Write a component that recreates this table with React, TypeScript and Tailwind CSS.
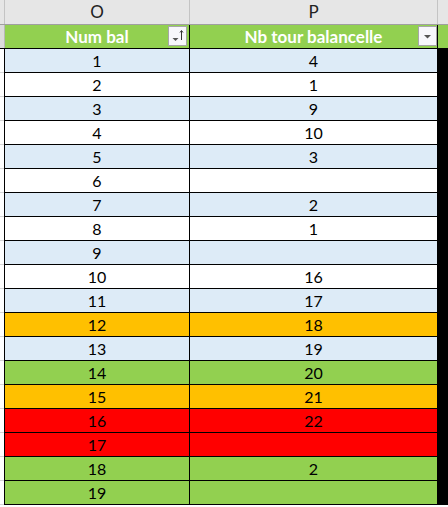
type Fill = "blue" | "white" | "orange" | "green" | "red";

const fills: Record<Fill, string> = {
  blue: "bg-[#ddebf7]",
  white: "bg-white",
  orange: "bg-[#ffc000]",
  green: "bg-[#92d050]",
  red: "bg-[#ff0000]",
};

const rows: { num: string; tour: string; fill: Fill }[] = [
  { num: "1", tour: "4", fill: "blue" },
  { num: "2", tour: "1", fill: "white" },
  { num: "3", tour: "9", fill: "blue" },
  { num: "4", tour: "10", fill: "white" },
  { num: "5", tour: "3", fill: "blue" },
  { num: "6", tour: "", fill: "white" },
  { num: "7", tour: "2", fill: "blue" },
  { num: "8", tour: "1", fill: "white" },
  { num: "9", tour: "", fill: "blue" },
  { num: "10", tour: "16", fill: "white" },
  { num: "11", tour: "17", fill: "blue" },
  { num: "12", tour: "18", fill: "orange" },
  { num: "13", tour: "19", fill: "blue" },
  { num: "14", tour: "20", fill: "green" },
  { num: "15", tour: "21", fill: "orange" },
  { num: "16", tour: "22", fill: "red" },
  { num: "17", tour: "", fill: "red" },
  { num: "18", tour: "2", fill: "green" },
  { num: "19", tour: "", fill: "green" },
];

function FilterButton({ sorted }: { sorted?: boolean }) {
  return (
    <div className="h-[20px] w-[19px] border border-[#a6a6a6] bg-[#f7f7fb] flex items-center justify-center">
      {sorted ? (
        <svg width="17" height="18" viewBox="0 0 17 18">
          <path d="M3.5 11 L9.5 11 L6.5 14 Z" fill="#555" />
          <path d="M12.5 4 L12.5 13" stroke="#333" strokeWidth="1" />
          <path d="M11 5.5 L12.5 3.5 L14 5.5" stroke="#333" strokeWidth="1" fill="none" />
        </svg>
      ) : (
        <svg width="17" height="18" viewBox="0 0 17 18">
          <path d="M5 8 L12 8 L8.5 11.5 Z" fill="#555" />
        </svg>
      )}
    </div>
  );
}

export default function App() {
  return (
    <div
      className="w-[448px] h-[507px] overflow-hidden bg-white text-black"
      style={{ fontFamily: "Lato, 'Liberation Sans', sans-serif" }}
    >
      {/* column letters */}
      <div className="flex h-[25px] bg-[#e6e6e6] border-b border-[#9f9f9f] text-[17px] text-[#222]">
        <div className="w-[4px]" />
        <div className="w-[185px] border-l border-[#c4c4c4] flex items-center justify-center">O</div>
        <div className="w-[248px] border-l border-[#c4c4c4] flex items-center justify-center">P</div>
        <div className="w-[11px] border-l border-[#c4c4c4]" />
      </div>

      {/* table header */}
      <div className="flex h-[24px] border-b border-black text-[17px] font-bold text-white">
        <div className="w-[4px] bg-[#dcdcdc]" />
        <div className="relative w-[185px] bg-[#92d050] border-l border-[#b8b8b8] flex items-center justify-center">
          Num bal
          <div className="absolute right-[2px] top-[1px]">
            <FilterButton sorted />
          </div>
        </div>
        <div className="relative w-[248px] bg-[#92d050] border-l border-black flex items-center justify-center">
          Nb tour balancelle
          <div className="absolute right-0 top-[1px]">
            <FilterButton />
          </div>
        </div>
        <div className="w-[11px] bg-[#92d050] border-l border-black" />
      </div>

      {rows.map((r) => (
        <div key={r.num} className="flex h-[24px] text-[16px]">
          <div className="w-[4px] border-b border-[#d4d4d4]" />
          <div className={`w-[185px] border-l border-b border-black flex items-center justify-center ${fills[r.fill]}`}>
            {r.num}
          </div>
          <div className={`w-[248px] border-l border-b border-black flex items-center justify-center ${fills[r.fill]}`}>
            {r.tour}
          </div>
          <div className="w-[11px] bg-black" />
        </div>
      ))}
    </div>
  );
}
